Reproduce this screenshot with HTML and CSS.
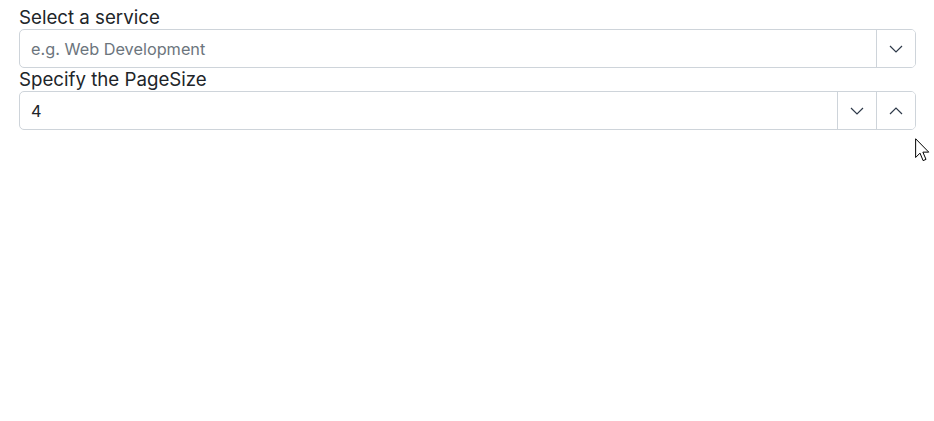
FILE: index.html
```html
<!DOCTYPE html>
<html lang="en">
<head>
<meta charset="utf-8">
<title>Select a service</title>
<link rel="stylesheet" href="styles.css">
</head>
<body>
<main class="form">
  <label class="label" for="service">Select a service</label>
  <div class="field">
    <input id="service" class="input" type="text" placeholder="e.g. Web Development">
    <button class="btn" type="button" aria-label="Open">
      <svg class="chev" viewBox="0 0 14 8" width="14" height="8"><path d="M1 1 L7 7 L13 1" fill="none" stroke="#2f3a4a" stroke-width="1.2"/></svg>
    </button>
  </div>
  <label class="label" for="pagesize">Specify the PageSize</label>
  <div class="field">
    <input id="pagesize" class="input value" type="text" value="4">
    <button class="btn" type="button" aria-label="Decrease">
      <svg class="chev" viewBox="0 0 14 8" width="14" height="8"><path d="M1 1 L7 7 L13 1" fill="none" stroke="#2f3a4a" stroke-width="1.2"/></svg>
    </button>
    <button class="btn" type="button" aria-label="Increase">
      <svg class="chev" viewBox="0 0 14 8" width="14" height="8"><path d="M1 7 L7 1 L13 7" fill="none" stroke="#2f3a4a" stroke-width="1.2"/></svg>
    </button>
  </div>
</main>
<svg class="cursor" viewBox="0 0 12 19" width="15" height="24"><path d="M0.5 0.5 L0.5 15.5 L4 12 L6.5 18 L8.8 17 L6.3 11.2 L11 11.2 Z" fill="#fff" stroke="#000" stroke-width="0.8" stroke-linejoin="miter"/></svg>
</body>
</html>
```
FILE: styles.css
```css
html, body {
  margin: 0;
  padding: 0;
  background: #ffffff;
}
body {
  font-family: "Inter", "Noto Sans", sans-serif;
  color: #212529;
  position: relative;
  min-height: 421px;
}
.form {
  display: flex;
  flex-direction: column;
  padding: 6px 18px 0 19px;
}
.label {
  font-size: 18.7px;
  line-height: 23px;
  color: #212529;
}
.field {
  display: flex;
  height: 39px;
  box-sizing: border-box;
  border: 1px solid #ced4da;
  border-radius: 5px;
  overflow: hidden;
}
.input {
  flex: 1;
  min-width: 0;
  border: 0;
  outline: none;
  padding: 0 11px;
  font-family: "Inter", "Noto Sans", sans-serif;
  font-size: 16.3px;
  color: #212529;
  background: transparent;
}
.input::placeholder {
  color: #6c757d;
}
.btn {
  width: 39px;
  flex: none;
  border: 0;
  border-left: 1px solid #ced4da;
  background: #fff;
  padding: 0;
  display: flex;
  align-items: center;
  justify-content: center;
}
.chev {
  display: block;
}
.cursor {
  position: absolute;
  left: 915px;
  top: 138px;
}
```
